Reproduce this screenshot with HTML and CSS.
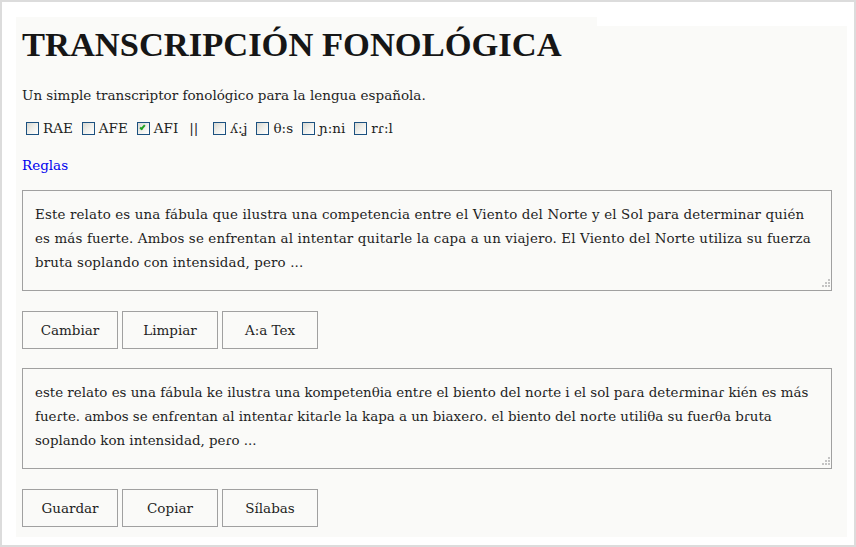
FILE: index.html
```html
<!DOCTYPE html>
<html>
<head>
	<title> Transcripción fonológica </title>
	<meta charset="utf-8">
	<link rel="stylesheet" href="styles.css">
</head>
<body>
	<div class="frame">
		<div class="tab"></div>
		<div class="panel">
			<h1>TRANSCRIPCIÓN FONOLÓGICA</h1>
			<p class="intro">Un simple transcriptor fonológico para la lengua española.</p>

			<div class="opts">
				<label><input type="checkbox" id="rae">RAE</label>
				<label><input type="checkbox" id="afe">AFE</label>
				<label><input type="checkbox" id="afi" checked>AFI</label>
				<span class="sep">||</span>
				<label><input type="checkbox" id="ll">ʎ:ʝ</label>
				<label><input type="checkbox" id="th">θ:s</label>
				<label><input type="checkbox" id="ny">ɲ:ni</label>
				<label><input type="checkbox" id="rl">rɾ:l</label>
			</div>

			<a class="rules" href="#">Reglas</a>

			<div class="area">
				<textarea class="box" id="src">Este relato es una fábula que ilustra una competencia entre el Viento del Norte y el Sol para determinar quién es más fuerte. Ambos se enfrentan al intentar quitarle la capa a un viajero. El Viento del Norte utiliza su fuerza bruta soplando con intensidad, pero ...</textarea>
				<svg class="grip" width="9" height="9" viewBox="0 0 9 9"><rect x="7" y="1" width="2" height="2"/><rect x="4" y="4" width="2" height="2"/><rect x="7" y="4" width="2" height="2"/><rect x="1" y="7" width="2" height="2"/><rect x="4" y="7" width="2" height="2"/><rect x="7" y="7" width="2" height="2"/></svg>
			</div>

			<div class="btns">
				<button id="cambiar">Cambiar</button>
				<button id="limpiar">Limpiar</button>
				<button id="tex">A:a Tex</button>
			</div>

			<div class="area out">
				<textarea class="box" id="out">este relato es una fábula ke ilustɾa una kompetenθia entɾe el biento del noɾte i el sol paɾa deteɾminaɾ kién es más fueɾte. ambos se enfɾentan al intentaɾ kitaɾle la kapa a un biaxeɾo. el biento del noɾte utiliθa su fueɾθa bɾuta soplando kon intensidad, peɾo ...</textarea>
				<svg class="grip" width="9" height="9" viewBox="0 0 9 9"><rect x="7" y="1" width="2" height="2"/><rect x="4" y="4" width="2" height="2"/><rect x="7" y="4" width="2" height="2"/><rect x="1" y="7" width="2" height="2"/><rect x="4" y="7" width="2" height="2"/><rect x="7" y="7" width="2" height="2"/></svg>
			</div>

			<div class="btns">
				<button id="guardar">Guardar</button>
				<button id="copiar">Copiar</button>
				<button id="silabas">Sílabas</button>
			</div>
		</div>
	</div>
</body>
</html>
```

FILE: styles.css
```css
*, *:before, *:after { box-sizing: border-box; }

html, body { margin: 0; background: #fff; }

body { font-family: "DejaVu Serif", serif; font-size: 13.5px; color: #1e1e1e; }

.frame {
	width: 856px; height: 547px;
	border: 2px solid #dcdcdc;
	padding: 15px 7px 8px 14px;
}

.tab { width: 581px; height: 9px; background: #fafaf8; }

.panel {
	background: #fafaf8;
	padding: 0 15px 10px 6px;
}

h1 {
	font-family: "Liberation Serif", "Times New Roman", serif;
	font-size: 34.5px; line-height: 37px; font-weight: bold;
	margin: 0; color: #161616;
}

.intro { margin: 22px 0 0 0; line-height: 20px; }

.opts { margin-top: 13px; line-height: 20px; display: flex; align-items: center; gap: 5px; }
.opts label { display: inline-flex; align-items: center; }
.opts .sep { margin: 0 6px; }

.opts input {
	-webkit-appearance: none; appearance: none;
	width: 13px; height: 13px; margin: 0 4px 0 4px;
	border: 1px solid #1c5180;
	background: linear-gradient(135deg, #d8d8d2 0%, #efefeb 50%, #fff 100%);
	position: relative;
}
.opts input:checked:after {
	content: ""; position: absolute; left: 3px; top: 1px;
	width: 3px; height: 6px;
	border: solid #21a121; border-width: 0 2px 2px 0;
	transform: rotate(40deg);
}

.rules { display: block; margin-top: 17px; line-height: 20px; color: #0000ee; text-decoration: none; }

.area { position: relative; width: 810px; margin-top: 15px; }
.area.out { margin-top: 19px; }

.box {
	display: block; width: 810px; height: 101px;
	border: 1px solid #a0a0a0; background: #fafaf8;
	padding: 12px 12px; resize: none;
	font-family: "DejaVu Serif", serif; font-size: 13.4px; line-height: 24px; color: #1e1e1e;
}
#src { letter-spacing: 0.15px; }

.grip { position: absolute; right: 2px; bottom: 4px; fill: #c4c4c4; }

.btns { display: flex; gap: 4px; margin-top: 20px; }
.btns button {
	width: 96px; height: 38px;
	border: 1px solid #a0a0a0; background: #fafaf8;
	font-family: "DejaVu Serif", serif; font-size: 13.5px; color: #1e1e1e;
}
```
